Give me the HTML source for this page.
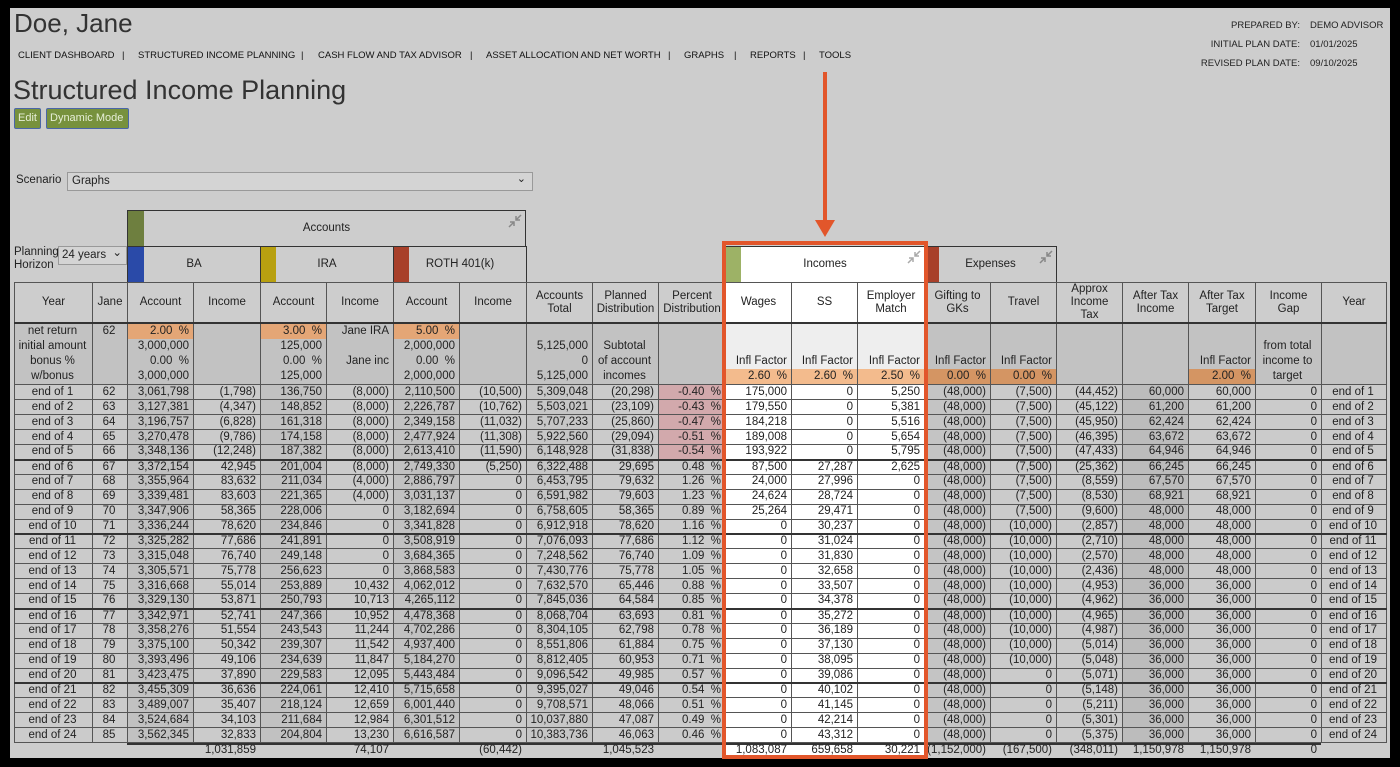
<!DOCTYPE html>
<html><head><meta charset="utf-8">
<style>
*{box-sizing:border-box;margin:0;padding:0}
html,body{width:1400px;height:767px;overflow:hidden;background:#000}
body{position:relative;font-family:"Liberation Sans",sans-serif;color:#222}
#pg{position:absolute;left:10px;top:8px;width:1380px;height:750px;background:#cdcdcd}
.a{position:absolute}
.nav{position:absolute;top:50px;font-size:9.5px;color:#111;white-space:nowrap}
.meta{font-size:9.5px;color:#222;white-space:nowrap}
.btn{position:absolute;top:108px;height:21px;background:#77913d;border:1px solid #4a66a8;color:#e6eed6;font-size:11px;line-height:19px;padding:0 3px;border-radius:2px;white-space:nowrap}
.box{position:absolute;border:1px solid #333;font-size:11.5px;text-align:center}
.bar{position:absolute;top:0;bottom:0;left:0}
.ic{position:absolute;right:3px;top:3px}
table{position:absolute;left:14px;top:282px;border-collapse:collapse;table-layout:fixed;font-size:11.5px}
td{border:1px solid #555;padding:0 4px 0 2px;text-align:right;line-height:13px;white-space:nowrap;overflow:hidden}
tr.h td{height:39px;text-align:center;line-height:13px;background:#cdcdcd;padding:0 1px}
tr.pr td{height:59px;vertical-align:top;background:#c2c2c2;padding:0;line-height:15px;border-top:2px solid #333}
tr.pr td div{height:15px;padding:0 4px 0 2px}
.o{background:#e4a676}
.ol{background:#f3bb8d}
.od{background:#d49563}
tbody tr td{height:15px}
tbody tr.g td{height:14px;border-top:2px solid #333}
tbody td:nth-child(1),tbody td:nth-child(2),tbody td:nth-child(21){text-align:center}
tbody td{background:#cbcbcb}
tbody td:nth-child(3),tbody td:nth-child(5),tbody td:nth-child(7){background:#c1c1c1}
tbody td:nth-child(9){background:#c6c6c6}
tbody td:nth-child(12),tbody td:nth-child(13),tbody td:nth-child(14){background:#fff}
tbody td:nth-child(15){background:#c4c4c4}
tbody td:nth-child(18){background:#bcbcbc}
tbody td.p{background:#d2a9ac}
.w{background:#fff!important}
.tot{position:absolute;top:743px;height:15px;font-size:11.5px;line-height:15px;text-align:right}
</style></head><body>
<div id="pg"></div>
<div class="a" style="left:14px;top:8px;font-size:26px;color:#333">Doe, Jane</div>
<div class="nav" style="left:18px">CLIENT DASHBOARD</div>
<div class="nav" style="left:122px">|</div>
<div class="nav" style="left:138px">STRUCTURED INCOME PLANNING</div>
<div class="nav" style="left:301px">|</div>
<div class="nav" style="left:318px">CASH FLOW AND TAX ADVISOR</div>
<div class="nav" style="left:470px">|</div>
<div class="nav" style="left:486px">ASSET ALLOCATION AND NET WORTH</div>
<div class="nav" style="left:668px">|</div>
<div class="nav" style="left:684px">GRAPHS</div>
<div class="nav" style="left:734px">|</div>
<div class="nav" style="left:750px">REPORTS</div>
<div class="nav" style="left:803px">|</div>
<div class="nav" style="left:819px">TOOLS</div>
<div class="a meta" style="right:100px;top:16px;text-align:right;line-height:19px">PREPARED BY:<br>INITIAL PLAN DATE:<br>REVISED PLAN DATE:</div>
<div class="a meta" style="left:1310px;top:16px;line-height:19px">DEMO ADVISOR<br>01/01/2025<br>09/10/2025</div>
<div class="a" style="left:13px;top:75px;font-size:27px;color:#333">Structured Income Planning</div>
<div class="btn" style="left:14px;width:27px">Edit</div>
<div class="btn" style="left:46px;width:83px">Dynamic Mode</div>
<div class="a" style="left:16px;top:174px;font-size:11.5px">Scenario</div>
<div class="a" style="left:67px;top:172px;width:466px;height:19px;border:1px solid #999;background:#d4d4d4;font-size:11.5px;line-height:17px;padding-left:4px">Graphs<span style="position:absolute;right:6px;top:-2px;font-size:11px">&#8964;</span></div>
<div class="a" style="left:14px;top:246px;font-size:11.5px;line-height:13px">Planning<br>Horizon</div>
<div class="a" style="left:58px;top:246px;width:69px;height:19px;border:1px solid #999;background:#d4d4d4;font-size:11.5px;line-height:17px;padding-left:3px">24 years<span style="position:absolute;right:4px;top:-2px">&#8964;</span></div>

<div class="box" style="left:127px;top:210px;width:399px;height:37px;line-height:35px;background:#cdcdcd"><div class="bar" style="width:16px;background:#6e7f3f"></div>Accounts<svg class="ic" width="14" height="14" viewBox="0 0 14 14"><path d="M13 1L8 6M8 2v4h4M1 13l5-5M2 8h4v4" stroke="#888" stroke-width="1.5" fill="none"/></svg></div>
<div class="box" style="left:127px;top:246px;width:134px;height:37px;line-height:35px"><div class="bar" style="width:16px;background:#2a4aa8"></div>BA</div>
<div class="box" style="left:260px;top:246px;width:134px;height:37px;line-height:35px"><div class="bar" style="width:15px;background:#b8a010"></div>IRA</div>
<div class="box" style="left:393px;top:246px;width:134px;height:37px;line-height:35px"><div class="bar" style="width:15px;background:#a8402a"></div>ROTH 401(k)</div>
<div class="box" style="left:725px;top:246px;width:200px;height:37px;line-height:35px;background:#fff"><div class="bar" style="width:15px;background:#9db266"></div>Incomes<svg class="ic" width="14" height="14" viewBox="0 0 14 14"><path d="M13 1L8 6M8 2v4h4M1 13l5-5M2 8h4v4" stroke="#aaa" stroke-width="1.5" fill="none"/></svg></div>
<div class="box" style="left:924px;top:246px;width:133px;height:37px;line-height:35px;background:#cdcdcd"><div class="bar" style="width:14px;background:#a8402a"></div>Expenses<svg class="ic" width="14" height="14" viewBox="0 0 14 14"><path d="M13 1L8 6M8 2v4h4M1 13l5-5M2 8h4v4" stroke="#888" stroke-width="1.5" fill="none"/></svg></div>

<table>
<colgroup><col style="width:78px"><col style="width:35px"><col style="width:66px"><col style="width:67px"><col style="width:66px"><col style="width:67px"><col style="width:66px"><col style="width:67px"><col style="width:66px"><col style="width:66px"><col style="width:67px"><col style="width:66px"><col style="width:66px"><col style="width:67px"><col style="width:66px"><col style="width:66px"><col style="width:66px"><col style="width:66px"><col style="width:67px"><col style="width:66px"><col style="width:65px"></colgroup>
<thead>
<tr class="h"><td>Year</td><td>Jane</td><td>Account</td><td>Income</td><td>Account</td><td>Income</td><td>Account</td><td>Income</td><td>Accounts<br>Total</td><td>Planned<br>Distribution</td><td>Percent<br>Distribution</td><td class="w">Wages</td><td class="w">SS</td><td class="w">Employer<br>Match</td><td>Gifting to<br>GKs</td><td>Travel</td><td>Approx<br>Income<br>Tax</td><td>After Tax<br>Income</td><td>After Tax<br>Target</td><td>Income<br>Gap</td><td>Year</td></tr>
<tr class="pr">
<td style="text-align:center"><div>net return</div><div>initial amount</div><div>bonus %</div><div>w/bonus</div></td>
<td style="text-align:center"><div>62</div></td>
<td><div class="o">2.00 &nbsp;%</div><div>3,000,000</div><div>0.00 &nbsp;%</div><div>3,000,000</div></td>
<td></td>
<td><div class="o">3.00 &nbsp;%</div><div>125,000</div><div>0.00 &nbsp;%</div><div>125,000</div></td>
<td><div>Jane IRA</div><div></div><div>Jane inc</div></td>
<td><div class="o">5.00 &nbsp;%</div><div>2,000,000</div><div>0.00 &nbsp;%</div><div>2,000,000</div></td>
<td></td>
<td><div></div><div>5,125,000</div><div>0</div><div>5,125,000</div></td>
<td style="text-align:center"><div></div><div>Subtotal</div><div>of account</div><div>incomes</div></td>
<td></td>
<td style="background:#eeeeee"><div></div><div></div><div>Infl Factor</div><div class="ol">2.60 &nbsp;%</div></td>
<td style="background:#eeeeee"><div></div><div></div><div>Infl Factor</div><div class="ol">2.60 &nbsp;%</div></td>
<td style="background:#eeeeee"><div></div><div></div><div>Infl Factor</div><div class="ol">2.50 &nbsp;%</div></td>
<td><div></div><div></div><div>Infl Factor</div><div class="od">0.00 &nbsp;%</div></td>
<td><div></div><div></div><div>Infl Factor</div><div class="od">0.00 &nbsp;%</div></td>
<td></td><td></td>
<td><div></div><div></div><div>Infl Factor</div><div class="od">2.00 &nbsp;%</div></td>
<td style="text-align:center"><div></div><div>from total</div><div>income to</div><div>target</div></td>
<td></td>
</tr>
</thead>
<tbody>
<tr><td>end of 1</td><td>62</td><td>3,061,798</td><td>(1,798)</td><td>136,750</td><td>(8,000)</td><td>2,110,500</td><td>(10,500)</td><td>5,309,048</td><td>(20,298)</td><td class="p">-0.40 &nbsp;%</td><td>175,000</td><td>0</td><td>5,250</td><td>(48,000)</td><td>(7,500)</td><td>(44,452)</td><td>60,000</td><td>60,000</td><td>0</td><td>end of 1</td></tr>
<tr><td>end of 2</td><td>63</td><td>3,127,381</td><td>(4,347)</td><td>148,852</td><td>(8,000)</td><td>2,226,787</td><td>(10,762)</td><td>5,503,021</td><td>(23,109)</td><td class="p">-0.43 &nbsp;%</td><td>179,550</td><td>0</td><td>5,381</td><td>(48,000)</td><td>(7,500)</td><td>(45,122)</td><td>61,200</td><td>61,200</td><td>0</td><td>end of 2</td></tr>
<tr><td>end of 3</td><td>64</td><td>3,196,757</td><td>(6,828)</td><td>161,318</td><td>(8,000)</td><td>2,349,158</td><td>(11,032)</td><td>5,707,233</td><td>(25,860)</td><td class="p">-0.47 &nbsp;%</td><td>184,218</td><td>0</td><td>5,516</td><td>(48,000)</td><td>(7,500)</td><td>(45,950)</td><td>62,424</td><td>62,424</td><td>0</td><td>end of 3</td></tr>
<tr><td>end of 4</td><td>65</td><td>3,270,478</td><td>(9,786)</td><td>174,158</td><td>(8,000)</td><td>2,477,924</td><td>(11,308)</td><td>5,922,560</td><td>(29,094)</td><td class="p">-0.51 &nbsp;%</td><td>189,008</td><td>0</td><td>5,654</td><td>(48,000)</td><td>(7,500)</td><td>(46,395)</td><td>63,672</td><td>63,672</td><td>0</td><td>end of 4</td></tr>
<tr><td>end of 5</td><td>66</td><td>3,348,136</td><td>(12,248)</td><td>187,382</td><td>(8,000)</td><td>2,613,410</td><td>(11,590)</td><td>6,148,928</td><td>(31,838)</td><td class="p">-0.54 &nbsp;%</td><td>193,922</td><td>0</td><td>5,795</td><td>(48,000)</td><td>(7,500)</td><td>(47,433)</td><td>64,946</td><td>64,946</td><td>0</td><td>end of 5</td></tr>
<tr class="g"><td>end of 6</td><td>67</td><td>3,372,154</td><td>42,945</td><td>201,004</td><td>(8,000)</td><td>2,749,330</td><td>(5,250)</td><td>6,322,488</td><td>29,695</td><td>0.48 &nbsp;%</td><td>87,500</td><td>27,287</td><td>2,625</td><td>(48,000)</td><td>(7,500)</td><td>(25,362)</td><td>66,245</td><td>66,245</td><td>0</td><td>end of 6</td></tr>
<tr><td>end of 7</td><td>68</td><td>3,355,964</td><td>83,632</td><td>211,034</td><td>(4,000)</td><td>2,886,797</td><td>0</td><td>6,453,795</td><td>79,632</td><td>1.26 &nbsp;%</td><td>24,000</td><td>27,996</td><td>0</td><td>(48,000)</td><td>(7,500)</td><td>(8,559)</td><td>67,570</td><td>67,570</td><td>0</td><td>end of 7</td></tr>
<tr><td>end of 8</td><td>69</td><td>3,339,481</td><td>83,603</td><td>221,365</td><td>(4,000)</td><td>3,031,137</td><td>0</td><td>6,591,982</td><td>79,603</td><td>1.23 &nbsp;%</td><td>24,624</td><td>28,724</td><td>0</td><td>(48,000)</td><td>(7,500)</td><td>(8,530)</td><td>68,921</td><td>68,921</td><td>0</td><td>end of 8</td></tr>
<tr><td>end of 9</td><td>70</td><td>3,347,906</td><td>58,365</td><td>228,006</td><td>0</td><td>3,182,694</td><td>0</td><td>6,758,605</td><td>58,365</td><td>0.89 &nbsp;%</td><td>25,264</td><td>29,471</td><td>0</td><td>(48,000)</td><td>(7,500)</td><td>(9,600)</td><td>48,000</td><td>48,000</td><td>0</td><td>end of 9</td></tr>
<tr><td>end of 10</td><td>71</td><td>3,336,244</td><td>78,620</td><td>234,846</td><td>0</td><td>3,341,828</td><td>0</td><td>6,912,918</td><td>78,620</td><td>1.16 &nbsp;%</td><td>0</td><td>30,237</td><td>0</td><td>(48,000)</td><td>(10,000)</td><td>(2,857)</td><td>48,000</td><td>48,000</td><td>0</td><td>end of 10</td></tr>
<tr class="g"><td>end of 11</td><td>72</td><td>3,325,282</td><td>77,686</td><td>241,891</td><td>0</td><td>3,508,919</td><td>0</td><td>7,076,093</td><td>77,686</td><td>1.12 &nbsp;%</td><td>0</td><td>31,024</td><td>0</td><td>(48,000)</td><td>(10,000)</td><td>(2,710)</td><td>48,000</td><td>48,000</td><td>0</td><td>end of 11</td></tr>
<tr><td>end of 12</td><td>73</td><td>3,315,048</td><td>76,740</td><td>249,148</td><td>0</td><td>3,684,365</td><td>0</td><td>7,248,562</td><td>76,740</td><td>1.09 &nbsp;%</td><td>0</td><td>31,830</td><td>0</td><td>(48,000)</td><td>(10,000)</td><td>(2,570)</td><td>48,000</td><td>48,000</td><td>0</td><td>end of 12</td></tr>
<tr><td>end of 13</td><td>74</td><td>3,305,571</td><td>75,778</td><td>256,623</td><td>0</td><td>3,868,583</td><td>0</td><td>7,430,776</td><td>75,778</td><td>1.05 &nbsp;%</td><td>0</td><td>32,658</td><td>0</td><td>(48,000)</td><td>(10,000)</td><td>(2,436)</td><td>48,000</td><td>48,000</td><td>0</td><td>end of 13</td></tr>
<tr><td>end of 14</td><td>75</td><td>3,316,668</td><td>55,014</td><td>253,889</td><td>10,432</td><td>4,062,012</td><td>0</td><td>7,632,570</td><td>65,446</td><td>0.88 &nbsp;%</td><td>0</td><td>33,507</td><td>0</td><td>(48,000)</td><td>(10,000)</td><td>(4,953)</td><td>36,000</td><td>36,000</td><td>0</td><td>end of 14</td></tr>
<tr><td>end of 15</td><td>76</td><td>3,329,130</td><td>53,871</td><td>250,793</td><td>10,713</td><td>4,265,112</td><td>0</td><td>7,845,036</td><td>64,584</td><td>0.85 &nbsp;%</td><td>0</td><td>34,378</td><td>0</td><td>(48,000)</td><td>(10,000)</td><td>(4,962)</td><td>36,000</td><td>36,000</td><td>0</td><td>end of 15</td></tr>
<tr class="g"><td>end of 16</td><td>77</td><td>3,342,971</td><td>52,741</td><td>247,366</td><td>10,952</td><td>4,478,368</td><td>0</td><td>8,068,704</td><td>63,693</td><td>0.81 &nbsp;%</td><td>0</td><td>35,272</td><td>0</td><td>(48,000)</td><td>(10,000)</td><td>(4,965)</td><td>36,000</td><td>36,000</td><td>0</td><td>end of 16</td></tr>
<tr><td>end of 17</td><td>78</td><td>3,358,276</td><td>51,554</td><td>243,543</td><td>11,244</td><td>4,702,286</td><td>0</td><td>8,304,105</td><td>62,798</td><td>0.78 &nbsp;%</td><td>0</td><td>36,189</td><td>0</td><td>(48,000)</td><td>(10,000)</td><td>(4,987)</td><td>36,000</td><td>36,000</td><td>0</td><td>end of 17</td></tr>
<tr><td>end of 18</td><td>79</td><td>3,375,100</td><td>50,342</td><td>239,307</td><td>11,542</td><td>4,937,400</td><td>0</td><td>8,551,806</td><td>61,884</td><td>0.75 &nbsp;%</td><td>0</td><td>37,130</td><td>0</td><td>(48,000)</td><td>(10,000)</td><td>(5,014)</td><td>36,000</td><td>36,000</td><td>0</td><td>end of 18</td></tr>
<tr><td>end of 19</td><td>80</td><td>3,393,496</td><td>49,106</td><td>234,639</td><td>11,847</td><td>5,184,270</td><td>0</td><td>8,812,405</td><td>60,953</td><td>0.71 &nbsp;%</td><td>0</td><td>38,095</td><td>0</td><td>(48,000)</td><td>(10,000)</td><td>(5,048)</td><td>36,000</td><td>36,000</td><td>0</td><td>end of 19</td></tr>
<tr><td>end of 20</td><td>81</td><td>3,423,475</td><td>37,890</td><td>229,583</td><td>12,095</td><td>5,443,484</td><td>0</td><td>9,096,542</td><td>49,985</td><td>0.57 &nbsp;%</td><td>0</td><td>39,086</td><td>0</td><td>(48,000)</td><td>0</td><td>(5,071)</td><td>36,000</td><td>36,000</td><td>0</td><td>end of 20</td></tr>
<tr class="g"><td>end of 21</td><td>82</td><td>3,455,309</td><td>36,636</td><td>224,061</td><td>12,410</td><td>5,715,658</td><td>0</td><td>9,395,027</td><td>49,046</td><td>0.54 &nbsp;%</td><td>0</td><td>40,102</td><td>0</td><td>(48,000)</td><td>0</td><td>(5,148)</td><td>36,000</td><td>36,000</td><td>0</td><td>end of 21</td></tr>
<tr><td>end of 22</td><td>83</td><td>3,489,007</td><td>35,407</td><td>218,124</td><td>12,659</td><td>6,001,440</td><td>0</td><td>9,708,571</td><td>48,066</td><td>0.51 &nbsp;%</td><td>0</td><td>41,145</td><td>0</td><td>(48,000)</td><td>0</td><td>(5,211)</td><td>36,000</td><td>36,000</td><td>0</td><td>end of 22</td></tr>
<tr><td>end of 23</td><td>84</td><td>3,524,684</td><td>34,103</td><td>211,684</td><td>12,984</td><td>6,301,512</td><td>0</td><td>10,037,880</td><td>47,087</td><td>0.49 &nbsp;%</td><td>0</td><td>42,214</td><td>0</td><td>(48,000)</td><td>0</td><td>(5,301)</td><td>36,000</td><td>36,000</td><td>0</td><td>end of 23</td></tr>
<tr><td>end of 24</td><td>85</td><td>3,562,345</td><td>32,833</td><td>204,804</td><td>13,230</td><td>6,616,587</td><td>0</td><td>10,383,736</td><td>46,063</td><td>0.46 &nbsp;%</td><td>0</td><td>43,312</td><td>0</td><td>(48,000)</td><td>0</td><td>(5,375)</td><td>36,000</td><td>36,000</td><td>0</td><td>end of 24</td></tr>
</tbody>
</table>

<div class="a" style="left:127px;top:743px;width:1194px;border-top:2px solid #333"></div>
<div class="a" style="left:725px;top:745px;width:199px;height:13px;background:#fff"></div>
<div class="tot" style="left:127px;width:133px;padding-right:4px">1,031,859</div>
<div class="tot" style="left:260px;width:133px;padding-right:4px">74,107</div>
<div class="tot" style="left:393px;width:133px;padding-right:4px">(60,442)</div>
<div class="tot" style="left:526px;width:132px;padding-right:4px">1,045,523</div>
<div class="tot" style="left:725px;width:66px;padding-right:4px">1,083,087</div>
<div class="tot" style="left:791px;width:66px;padding-right:4px">659,658</div>
<div class="tot" style="left:857px;width:67px;padding-right:4px">30,221</div>
<div class="tot" style="left:924px;width:66px;padding-right:4px">(1,152,000)</div>
<div class="tot" style="left:990px;width:66px;padding-right:4px">(167,500)</div>
<div class="tot" style="left:1056px;width:66px;padding-right:4px">(348,011)</div>
<div class="tot" style="left:1122px;width:66px;padding-right:4px">1,150,978</div>
<div class="tot" style="left:1188px;width:67px;padding-right:4px">1,150,978</div>
<div class="tot" style="left:1255px;width:66px;padding-right:4px">0</div>

<div class="a" style="left:722px;top:241px;width:206px;height:518px;border:4px solid #e2562b"></div>
<div class="a" style="left:823px;top:72px;width:4px;height:150px;background:#e2562b"></div>
<div class="a" style="left:815px;top:220px;width:0;height:0;border-left:10px solid transparent;border-right:10px solid transparent;border-top:17px solid #e2562b"></div>
</body></html>
